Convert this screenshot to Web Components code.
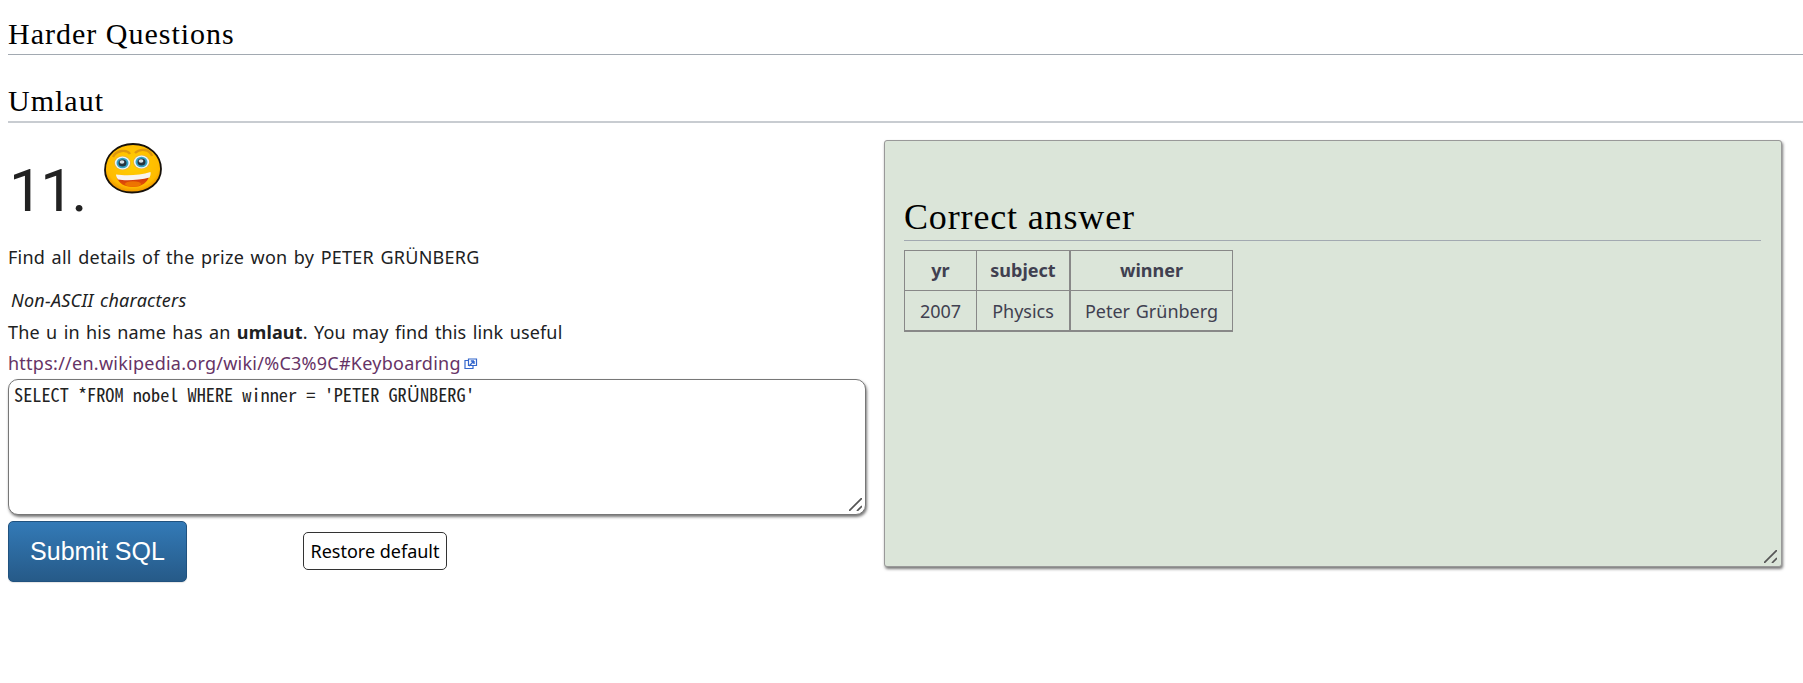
<!DOCTYPE html>
<html><head><meta charset="utf-8"><style>
html,body{margin:0;padding:0;background:#fff}
body{padding:0 0 0 8px;font-family:"Noto Sans",sans-serif;color:#202122;height:683px;box-sizing:border-box;overflow:hidden}
</style></head><body>
<wiki-heading style="padding-top:15px;height:39px">Harder Questions</wiki-heading>
<wiki-heading style="margin-top:27px;height:39px;--rule:#c8ccd1;--rw:2px">Umlaut</wiki-heading>
<quiz-row>
  <quiz-question></quiz-question>
  <answer-panel></answer-panel>
</quiz-row>
<script>
const def=(name,html)=>customElements.define(name,class extends HTMLElement{
  constructor(){super();this.attachShadow({mode:'open'}).innerHTML=html;}
});
def('wiki-heading',`<style>
:host{display:block;box-sizing:content-box;font:30px/38px "Liberation Serif",serif;letter-spacing:1px;color:#000;border-bottom:var(--rw,1px) solid var(--rule,#a2a9b1);}
</style><slot></slot>`);
def('quiz-row',`<style>
:host{display:flex;align-items:flex-start;gap:18px;margin-top:17px}
</style><slot></slot>`);
def('smiley-face',`<style>:host{display:inline-block;width:60px;height:52px;line-height:0}</style>
<svg width="60" height="52" viewBox="0 0 60 52"><defs>
<radialGradient id="f" cx=".5" cy=".42" r=".6"><stop offset="0" stop-color="#ffcf00"/><stop offset=".78" stop-color="#ffbb00"/><stop offset="1" stop-color="#e88600"/></radialGradient>
<linearGradient id="m" x1="0" y1="0" x2="0" y2="1"><stop offset="0" stop-color="#c92f12"/><stop offset="1" stop-color="#e85a00"/></linearGradient></defs>
<path d="M29 1C46 1 57 13 57 26C57 40 44 49.500 28 49.500C13 49.500 1 40 1 27C1 12 13 1 29 1Z" fill="url(#f)" stroke="#17110a" stroke-width="1.8"/>
<path d="M9 14c3-7 14-8 17-3M31 10c5-5 15-4 17 3" fill="none" stroke="#cf8615" stroke-width="2.400" opacity=".7"/>
<ellipse cx="18.500" cy="20" rx="8.500" ry="7.200" fill="#e8b23a"/><ellipse cx="18.500" cy="20" rx="7.600" ry="6.400" fill="#eef6f8"/><ellipse cx="18.500" cy="20" rx="6" ry="5.200" fill="#35a2c6"/><ellipse cx="18.500" cy="20" rx="4" ry="3.500" fill="#25343f"/><ellipse cx="18" cy="19" rx="2.400" ry="1.700" fill="#d5dee4"/>
<ellipse cx="37.500" cy="19" rx="8.500" ry="7.200" fill="#e8b23a"/><ellipse cx="37.500" cy="19" rx="7.600" ry="6.400" fill="#eef6f8"/><ellipse cx="37.500" cy="19" rx="6" ry="5.200" fill="#35a2c6"/><ellipse cx="37.500" cy="19" rx="4" ry="3.500" fill="#25343f"/><ellipse cx="37" cy="18" rx="2.400" ry="1.700" fill="#d5dee4"/>
<path d="M13 35C22 37 36 36 45 33C44 39 38 44 29 44C20 44 15 40 13 35Z" fill="url(#m)"/>
<path d="M12 31.500C22 33 36 32.500 46.500 29C47 31 46 33.500 45.500 34.500C36 37 22 38 14 36.500C13 35 12 33 12 31.500Z" fill="#f8f4f0"/>
<ellipse cx="29" cy="41" rx="8" ry="2.800" fill="#f07a00" opacity=".85"/>
</svg>`);
def('resize-grip',`<style>:host{display:block;position:absolute;right:var(--r,4px);bottom:var(--b,4px);width:13px;height:13px;line-height:0;pointer-events:none}</style>
<svg width="13" height="13" viewBox="0 0 13 13" fill="none" stroke="#555" stroke-width="1.7"><path d="M0 13L13 0M8 13L13 8"/></svg>`);
def('quiz-question',`<style>
:host{display:block;width:858px;font-size:18px;line-height:31px;letter-spacing:.25px;word-spacing:1.5px}
.num{display:flex;align-items:flex-start;height:82px;font:400 60px/70px Roboto,sans-serif;color:#222;letter-spacing:-2.500px;word-spacing:0;padding-top:0}
.num span{margin-top:16px;padding-left:1px}
smiley-face{margin:3px 0 0 19px}
p{margin:0}
.find{margin-top:20px}
.note{font-style:italic;margin-top:12px;padding-left:3px;height:32px}
.uml{letter-spacing:.15px}
.link{height:31px;white-space:nowrap;display:flex;align-items:center;gap:3px}
.link a{color:#663366;text-decoration:none}
.ta{position:relative;height:136px}
textarea{display:block;box-sizing:border-box;width:858px;height:136px;margin:0;padding:4px 5px;border:1px solid #777;border-radius:10px;box-shadow:1px 2px 3px #777;font:18.28px/20px "Noto Sans Mono CJK KR","DejaVu Sans Mono",monospace;letter-spacing:0;word-spacing:0;color:#222;background:#fff;outline:none;resize:none}
.btns{display:flex;align-items:center;margin-top:6px}
.sub{box-sizing:border-box;width:179px;height:61px;border:1px solid #20527f;border-radius:5px;background:linear-gradient(#337ab7,#265a88);color:#fff;font:25px "Liberation Sans",sans-serif;padding:0;box-shadow:0 1px 1px rgba(0,0,0,.1)}
.res{box-sizing:border-box;margin:0 0 2px 116px;width:144px;height:38px;border:1px solid #333;border-radius:5px;background:#fff;color:#000;font:18px "Noto Sans",sans-serif;padding:0;letter-spacing:0}
</style>
<div class="num"><span>11.</span><smiley-face></smiley-face></div>
<p class="find">Find all details of the prize won by PETER GRÜNBERG</p>
<p class="note">Non-ASCII characters</p>
<p class="uml">The u in his name has an <b>umlaut</b>. You may find this link useful</p>
<div class="link"><a href="#">https://en.wikipedia.org/wiki/%C3%9C#Keyboarding</a><svg width="14" height="12" viewBox="0 0 14 12" fill="none" stroke="#3366cc" stroke-width="1.2"><path d="M5 2.5H1v8h8V7"/><path d="M4.5 1h8v6.5h-8z" /><path d="M10 3H6.8M10 3v3M10 3L5 8" stroke-width="1.4"/></svg></div>
<div class="ta"><textarea spellcheck="false">SELECT *FROM nobel WHERE winner = 'PETER GRÜNBERG'</textarea><resize-grip></resize-grip></div>
<div class="btns"><button class="sub">Submit SQL</button><button class="res">Restore default</button></div>`);
def('answer-panel',`<style>
:host{display:block;position:relative;box-sizing:border-box;width:898px;height:427px;background:#dbe5d9;border:1px solid #999;border-radius:3px;box-shadow:1px 2px 3px #777;padding:55px 20px 0 19px}
h2{margin:0;font:400 36px/42px "Liberation Serif",serif;letter-spacing:.85px;color:#000;border-bottom:1px solid #a2a9b1;height:43px;padding-bottom:1px}
table{border-collapse:collapse;margin-top:9px;font:18px/22px "Noto Sans",sans-serif;color:#404050;letter-spacing:0;word-spacing:1px}
th,td{border:1px solid #888;text-align:center;padding:0;height:39px}
th{padding-bottom:2px;height:37px}
tr:last-child td{border-bottom:2px solid #888}
.c2{border-right-width:2px}
</style>
<h2>Correct answer</h2>
<table><tr><th style="width:71px">yr</th><th class="c2" style="width:92px">subject</th><th style="width:161px">winner</th></tr>
<tr><td>2007</td><td class="c2">Physics</td><td>Peter Grünberg</td></tr></table>
<resize-grip style="--r:4px;--b:3px"></resize-grip>`);
</script>
</body></html>
